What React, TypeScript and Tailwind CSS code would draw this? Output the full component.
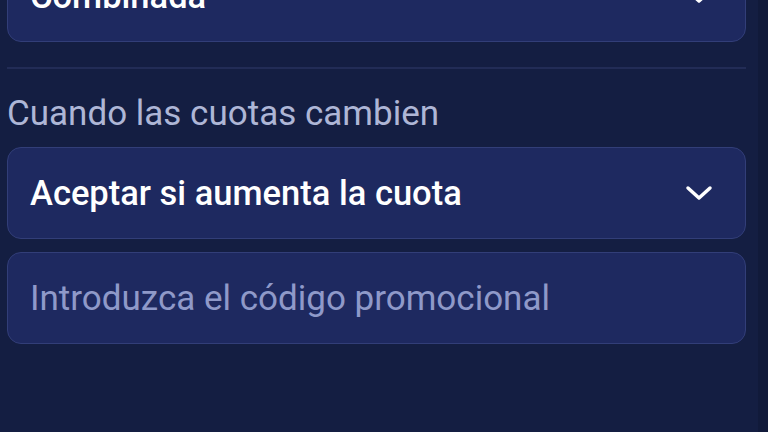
import { useState } from 'react';

function Chevron() {
    return (
        <svg width="28" height="16" viewBox="0 0 28 16" fill="none" className="shrink-0">
            <path d="M3 3 L14 13 L25 3" stroke="#ffffff" strokeWidth="3.5" strokeLinecap="round" strokeLinejoin="round" />
        </svg>
    );
}

function SelectBox({ value, className = '' }: { value: string; className?: string }) {
    return (
        <button
            type="button"
            className={`flex h-[92px] w-full items-center justify-between rounded-[14px] border border-[#323e78] bg-[#1e2960] pr-[32px] pl-[22px] text-left ${className}`}
        >
            <span className="text-[34.5px] leading-[40px] font-medium text-white">{value}</span>
            <Chevron />
        </button>
    );
}

export default function App() {
    const [promo, setPromo] = useState('');

    return (
        <div className="flex h-[432px] w-full overflow-hidden bg-[#111a3a] font-['Roboto',sans-serif]">
            <div className="flex w-[758px] flex-col bg-[#141e42] pr-[12px] pl-[7px]">
                <SelectBox value="Combinada" className="mt-[-50px]" />

                {/* separador */}
                <div className="mt-[25px] h-[2px] w-full bg-[#222c56]" />

                <p className="mt-[25px] text-[35px] leading-[40px] text-[#aeb6d6]">Cuando las cuotas cambien</p>

                <SelectBox value="Aceptar si aumenta la cuota" className="mt-[13px]" />

                <input
                    type="text"
                    value={promo}
                    onChange={(e) => setPromo(e.target.value)}
                    placeholder="Introduzca el código promocional"
                    className="mt-[13px] h-[92px] w-full rounded-[14px] border border-[#323e78] bg-[#1e2960] px-[22px] text-[35px] text-white outline-none placeholder:text-[#8f99c9]"
                />
            </div>
        </div>
    );
}
